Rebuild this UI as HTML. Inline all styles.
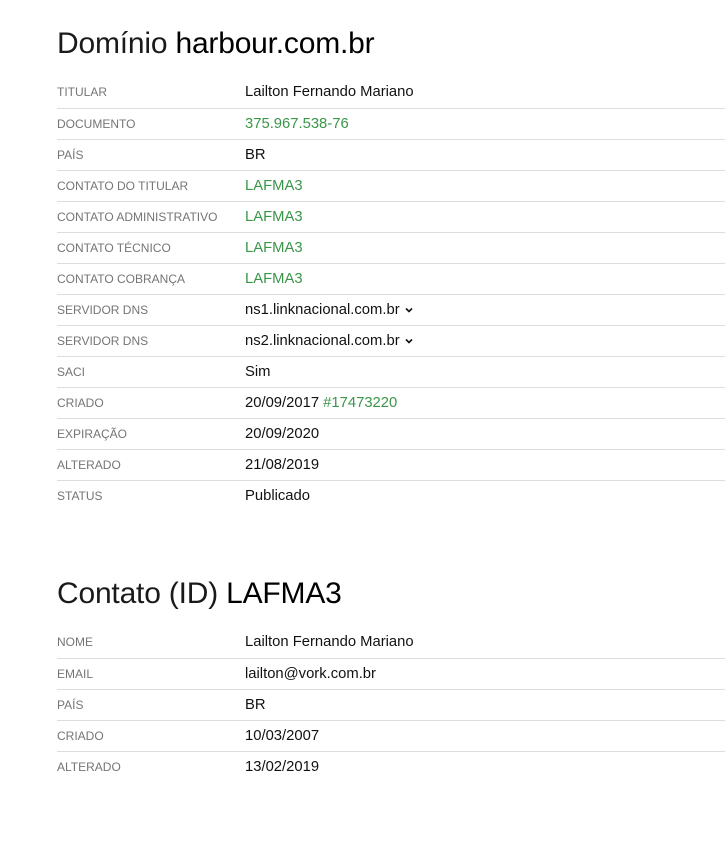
<!DOCTYPE html>
<html><head><meta charset="utf-8"><style>
body{margin:0;background:#fff;font-family:"Liberation Sans",sans-serif;color:#111;}
h1{position:absolute;left:57px;margin:0;font-size:30px;font-weight:normal;line-height:34px;color:#1a1a1a;letter-spacing:-0.2px}
h1 b{font-weight:normal;color:#000}
table{position:absolute;left:57px;width:668px;border-collapse:collapse}
tr{height:31px}
td{height:30px;padding:0;border-bottom:1px solid #ddd;vertical-align:middle;line-height:16px;box-sizing:border-box}
tr:last-child td{border-bottom:none}
td.l{width:188px;font-size:12px;color:#757575;text-transform:uppercase}
td.v{font-size:14.8px;color:#111}
td.g,.g{color:#3a9648}
svg{margin-left:5px;vertical-align:middle}
</style></head><body>
<h1 style="top:27px">Domínio <b>harbour.com.br</b></h1>
<table style="top:77px">
<tr><td class="l">Titular</td><td class="v">Lailton Fernando Mariano</td></tr>
<tr><td class="l">Documento</td><td class="v g">375.967.538-76</td></tr>
<tr><td class="l">País</td><td class="v">BR</td></tr>
<tr><td class="l">Contato do titular</td><td class="v g">LAFMA3</td></tr>
<tr><td class="l">Contato administrativo</td><td class="v g">LAFMA3</td></tr>
<tr><td class="l">Contato técnico</td><td class="v g">LAFMA3</td></tr>
<tr><td class="l">Contato cobrança</td><td class="v g">LAFMA3</td></tr>
<tr><td class="l">Servidor DNS</td><td class="v">ns1.linknacional.com.br<svg width="8" height="6" viewBox="0 0 8 6"><path d="M1 1.5 L4 4.5 L7 1.5" stroke="#111" stroke-width="1.6" fill="none"/></svg></td></tr>
<tr><td class="l">Servidor DNS</td><td class="v">ns2.linknacional.com.br<svg width="8" height="6" viewBox="0 0 8 6"><path d="M1 1.5 L4 4.5 L7 1.5" stroke="#111" stroke-width="1.6" fill="none"/></svg></td></tr>
<tr><td class="l">SACI</td><td class="v">Sim</td></tr>
<tr><td class="l">Criado</td><td class="v">20/09/2017 <span class="g">#17473220</span></td></tr>
<tr><td class="l">Expiração</td><td class="v">20/09/2020</td></tr>
<tr><td class="l">Alterado</td><td class="v">21/08/2019</td></tr>
<tr><td class="l">Status</td><td class="v">Publicado</td></tr>
</table>
<h1 style="top:577px">Contato (ID) <b>LAFMA3</b></h1>
<table style="top:627px">
<tr><td class="l">Nome</td><td class="v">Lailton Fernando Mariano</td></tr>
<tr><td class="l">Email</td><td class="v">lailton@vork.com.br</td></tr>
<tr><td class="l">País</td><td class="v">BR</td></tr>
<tr><td class="l">Criado</td><td class="v">10/03/2007</td></tr>
<tr><td class="l">Alterado</td><td class="v">13/02/2019</td></tr>
</table>
</body></html>
